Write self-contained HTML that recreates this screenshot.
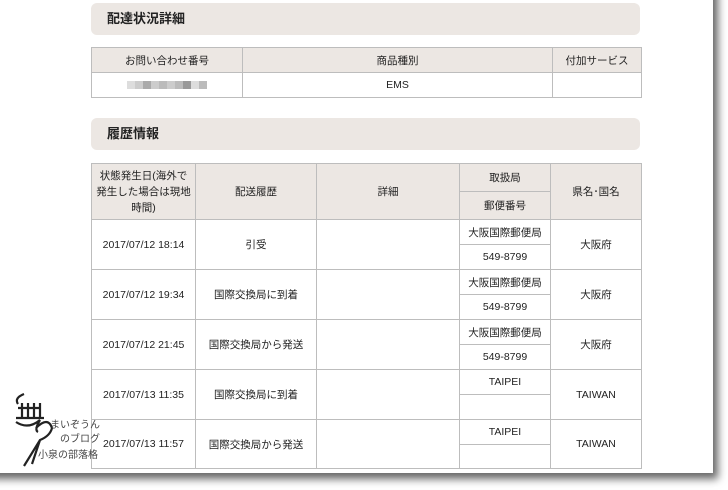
<!DOCTYPE html>
<html><head><meta charset="utf-8"><style>
body{margin:0;width:728px;height:490px;background:#fff;position:relative;overflow:hidden;font-family:"Liberation Sans","Noto Sans CJK JP",sans-serif;color:#222}
.page{position:absolute;left:-20px;top:-20px;width:733px;height:493px;background:#fff;box-shadow:4px 5px 8px 1px rgba(0,0,0,.6)}
.hd{position:absolute;left:91px;width:549px;height:32px;background:#ece7e3;border-radius:6px;font-size:13px;font-weight:bold;line-height:32px;box-sizing:border-box;padding-left:16px;color:#222}
table{position:absolute;left:91px;width:550px;border-collapse:collapse;table-layout:fixed;font-size:10.5px}
td{border:1px solid #bdbdbd;text-align:center;padding:0;vertical-align:middle}
th{border:1px solid #bdbdbd;background:#ece7e3;font-weight:normal;padding:0;text-align:center}
.b{display:inline-block;width:8px;height:8px;vertical-align:middle}
</style></head><body>
<div class="page"></div>
<div class="hd" style="top:3px">配達状況詳細</div>
<table style="top:47px">
<colgroup><col style="width:151px"><col style="width:310px"><col style="width:89px"></colgroup>
<tr style="height:25px"><th>お問い合わせ番号</th><th>商品種別</th><th>付加サービス</th></tr>
<tr style="height:25px"><td><span class="b" style="background:#ddd"></span><span class="b" style="background:#ccc"></span><span class="b" style="background:#aaa"></span><span class="b" style="background:#ccc"></span><span class="b" style="background:#bbb"></span><span class="b" style="background:#ccc"></span><span class="b" style="background:#bbb"></span><span class="b" style="background:#999"></span><span class="b" style="background:#ddd"></span><span class="b" style="background:#bbb"></span></td><td>EMS</td><td></td></tr>
</table>
<div class="hd" style="top:118px">履歴情報</div>
<table style="top:163px">
<colgroup><col style="width:104px"><col style="width:121px"><col style="width:143px"><col style="width:91px"><col style="width:91px"></colgroup>
<tr style="height:28px"><th rowspan="2" style="line-height:16px">状態発生日(海外で<br>発生した場合は現地<br>時間)</th><th rowspan="2">配送履歴</th><th rowspan="2">詳細</th><th>取扱局</th><th rowspan="2">県名･国名</th></tr>
<tr style="height:28px"><th>郵便番号</th></tr>
<tr style="height:25px"><td rowspan="2">2017/07/12 18:14</td><td rowspan="2">引受</td><td rowspan="2"></td><td>大阪国際郵便局</td><td rowspan="2">大阪府</td></tr>
<tr style="height:25px"><td>549-8799</td></tr>
<tr style="height:25px"><td rowspan="2">2017/07/12 19:34</td><td rowspan="2">国際交換局に到着</td><td rowspan="2"></td><td>大阪国際郵便局</td><td rowspan="2">大阪府</td></tr>
<tr style="height:25px"><td>549-8799</td></tr>
<tr style="height:25px"><td rowspan="2">2017/07/12 21:45</td><td rowspan="2">国際交換局から発送</td><td rowspan="2"></td><td>大阪国際郵便局</td><td rowspan="2">大阪府</td></tr>
<tr style="height:25px"><td>549-8799</td></tr>
<tr style="height:25px"><td rowspan="2">2017/07/13 11:35</td><td rowspan="2">国際交換局に到着</td><td rowspan="2"></td><td>TAIPEI</td><td rowspan="2">TAIWAN</td></tr>
<tr style="height:25px"><td></td></tr>
<tr style="height:25px"><td rowspan="2">2017/07/13 11:57</td><td rowspan="2">国際交換局から発送</td><td rowspan="2"></td><td>TAIPEI</td><td rowspan="2">TAIWAN</td></tr>
<tr style="height:24px"><td></td></tr>
</table>
<svg style="position:absolute;left:8px;top:390px" width="100" height="80" viewBox="0 0 100 80">
<g fill="none" stroke="#222" stroke-width="2.2">
<path d="M16 4 Q6 8 10 14 M10 18 h22 M14 13 v14 M20 13 v14 M26 13 v14 M32 13 v14 M8 28 h28 M8 32 q12 8 24 -2 q-6 10 -2 12 M28 38 q12 -12 16 0 q-2 8 -12 12 L16 76 M32 50 L24 74"/>
</g>
<text x="42" y="38" font-size="10" fill="#444" font-family="Noto Sans CJK JP,sans-serif">まいぞうん</text>
<text x="52" y="52" font-size="10" fill="#444" font-family="Noto Sans CJK JP,sans-serif">のブログ</text>
<text x="30" y="68" font-size="10" fill="#444" font-family="Noto Sans CJK JP,sans-serif">小泉の部落格</text>
</svg>
</body></html>
